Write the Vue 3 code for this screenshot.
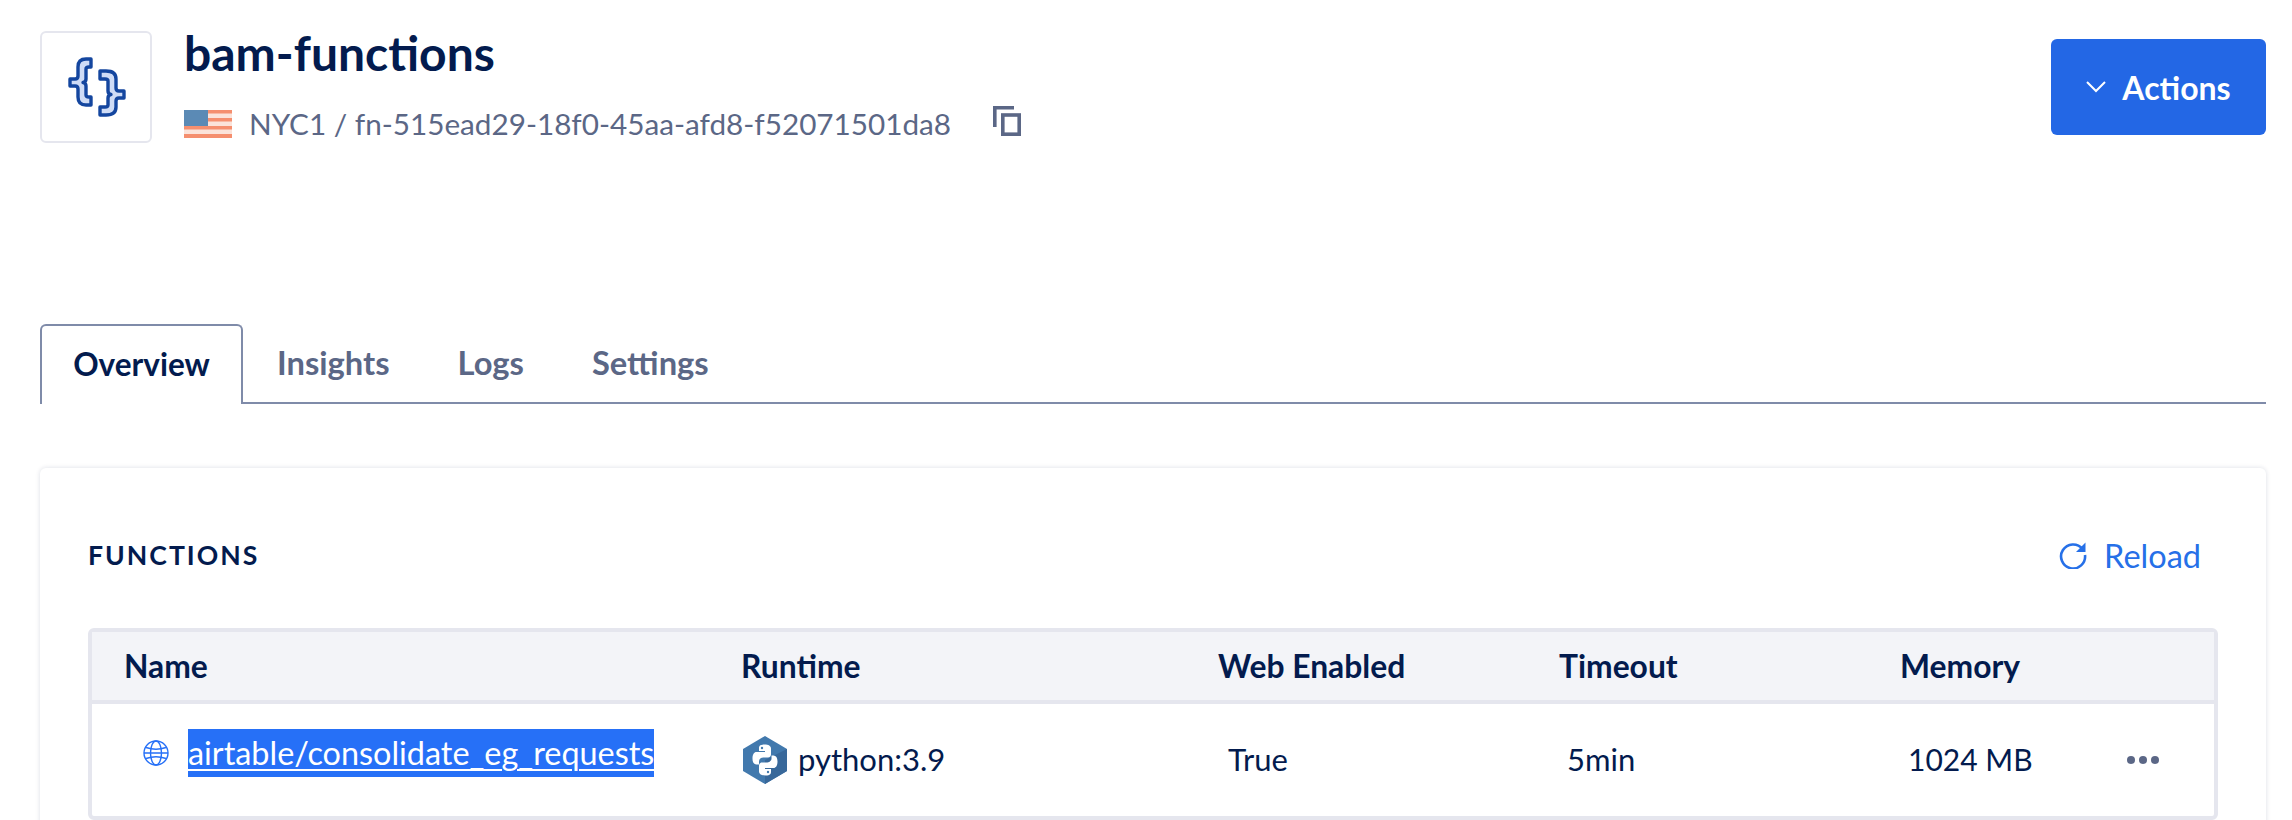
<script setup>
const cols = ['Name', 'Runtime', 'Web Enabled', 'Timeout', 'Memory']
const tabs = ['Insights', 'Logs', 'Settings']
</script>

<template>
  <div class="page">
    <header class="head">
      <div class="logo">
        <svg width="62" height="64" viewBox="0 0 62 64">
          <path class="brace" d="M26 4 H21 Q13 4 13 12 V21 Q13 24 10 24 H5 V31 H10 Q13 31 13 34 V42 Q13 50 21 50 H26 V42 H24 Q21 42 21 40 V31 Q21 28 18 27.5 Q21 27 21 24 V14 Q21 12 24 12 H26 Z" />
          <path class="brace" d="M35 16 H41 Q51 16 51 24 V33 Q51 36 54 36 H59 V43 H54 Q51 43 51 46 V52 Q51 60 41 60 H35 V52 H40 Q43 52 43 50 V43 Q43 40 46 39.5 Q43 39 43 36 V26 Q43 24 40 24 H35 Z" />
        </svg>
      </div>
      <div class="info">
        <h1 class="title">bam-functions</h1>
        <div class="sub">
          <svg class="flag" width="48" height="28" viewBox="0 0 48 28">
            <rect width="48" height="28" fill="#fbe3da" />
            <rect y="0" width="48" height="3.5" fill="#f58f6f" />
            <rect y="8" width="48" height="3.5" fill="#f58f6f" />
            <rect y="16" width="48" height="3.5" fill="#f58f6f" />
            <rect y="24" width="48" height="4" fill="#f58f6f" />
            <rect width="24" height="16" fill="#5b8ab5" />
          </svg>
          <span class="region">NYC1 / fn-515ead29-18f0-45aa-afd8-f52071501da8</span>
          <svg class="copy" width="28" height="30" viewBox="0 0 28 30" fill="none" stroke="#5b6786" stroke-width="3.6">
            <path d="M21 1.8 H1.8 V21" />
            <rect x="9.8" y="9" width="16.4" height="19.2" />
          </svg>
        </div>
      </div>
      <button class="actions">
        <svg width="20" height="12" viewBox="0 0 20 12" fill="none" stroke="#fff" stroke-width="2"><path d="M1 1 L10 10 L19 1" /></svg>
        <span>Actions</span>
      </button>
    </header>

    <nav class="tabs">
      <div class="tab active">Overview</div>
      <div v-for="t in tabs" :key="t" class="tab">{{ t }}</div>
      <div class="tab-rest"></div>
    </nav>

    <section class="card">
      <div class="card-head">
        <h2 class="fn">FUNCTIONS</h2>
        <div class="reload">
          <svg width="28" height="28" viewBox="0 0 28 28" fill="none">
            <path d="M23.5 8 A12 12 0 1 0 26 14" stroke="#2670e8" stroke-width="2.6" />
            <path d="M26.5 1.5 V11 H17 Z" fill="#2670e8" />
          </svg>
          <span>Reload</span>
        </div>
      </div>
      <div class="table">
        <div class="row th">
          <div v-for="c in cols" :key="c">{{ c }}</div>
        </div>
        <div class="row td">
          <div class="name">
            <svg width="26" height="26" viewBox="0 0 26 26" fill="none" stroke="#2670f7" stroke-width="1.4">
              <circle cx="13" cy="13" r="12" />
              <ellipse cx="13" cy="13" rx="5.5" ry="12" />
              <path d="M3 7.5 Q13 11 23 7.5 M1 13 H25 M3 18.5 Q13 15 23 18.5" />
            </svg>
            <a class="sel">airtable/consolidate_eg_requests</a>
          </div>
          <div class="runtime">
            <svg width="44" height="48" viewBox="0 0 44 48">
              <path d="M22 0 L44 13 V35 L22 48 L0 35 V13 Z" fill="#4279ad" />
              <path d="M22 24 L44 13 V35 L22 48 Z" fill="#38689a" />
              <path d="M21.5 8.5 C16.5 8.5 16 10.5 16 12.5 V15 H22 V16 H13.5 C11 16 9.5 18.5 9.5 22.5 C9.5 26.5 11 28.5 13.5 28.5 H16 V25.5 C16 23 18 21.5 20.5 21.5 H25 C27 21.5 28 20 28 18.5 V12.5 C28 10 25.5 8.5 21.5 8.5 Z" fill="#fff" />
              <path d="M22.5 39.5 C27.5 39.5 28 37.5 28 35.5 V33 H22 V32 H30.5 C33 32 34.5 29.5 34.5 25.5 C34.5 21.5 33 19.5 30.5 19.5 H28.5 V22.5 C28.5 25 26 26.5 23.5 26.5 H19 C17 26.5 16 28 16 29.5 V35.5 C16 38 18.5 39.5 22.5 39.5 Z" fill="#fff" />
              <circle cx="19" cy="12" r="1.2" fill="#4279ad" />
              <circle cx="25" cy="36" r="1.2" fill="#4279ad" />
            </svg>
            <span>python:3.9</span>
          </div>
          <div class="web">True</div>
          <div class="val">5min</div>
          <div class="val mem">
            <span>1024 MB</span>
            <span class="dots"><i></i><i></i><i></i></span>
          </div>
        </div>
      </div>
    </section>
  </div>
</template>

<style>
html, body { margin: 0; background: #fff; overflow: hidden; }
</style>

<style scoped>
.page {
  height: 820px;
  overflow: hidden;
  box-sizing: border-box;
  padding: 31px 26px 0 40px;
  font-family: Lato, "Liberation Sans", sans-serif;
  color: #031b4e;
}
.head { display: flex; align-items: flex-start; height: 293px; }
.logo {
  width: 112px; height: 112px; box-sizing: border-box;
  border: 2px solid #e5e6ee; border-radius: 6px;
  display: flex; align-items: center; justify-content: center;
}
.brace { fill: #cfdcf6; stroke: #14469f; stroke-width: 3.4; stroke-linejoin: round; }
.info { margin-left: 32px; flex: 1; }
.title { margin: -6px 0 0; font-size: 48px; line-height: 56px; font-weight: 700; color: #031b4e; }
.sub { display: flex; align-items: center; margin-top: 25px; color: #5b6786; font-size: 29.7px; line-height: 36px; }
.flag { flex: none; }
.region { margin-left: 17px; white-space: nowrap; }
.copy { margin-left: 42px; margin-top: -6px; }
.actions {
  width: 215px; height: 96px; margin-top: 8px; border: 0; border-radius: 6px;
  background: #2367e5; color: #fff; font: 700 32px Lato, sans-serif;
  display: flex; align-items: center; justify-content: center; gap: 16px;
}
.tabs { display: flex; height: 80px; }
.tab {
  box-sizing: border-box; padding: 0 34px; font-size: 32.7px; line-height: 78px;
  color: #5b6786; font-weight: 700; border-bottom: 2px solid #7f8ba9;
}
.tab.active {
  width: 203px; padding: 0; text-align: center; color: #031b4e; font-size: 31.5px; line-height: 76px;
  border: 2px solid #7f8ba9; border-bottom: 0; border-radius: 6px 6px 0 0;
}
.tab-rest { flex: 1; border-bottom: 2px solid #7f8ba9; }
.card {
  margin-top: 64px; height: 400px; box-sizing: border-box;
  padding: 0 48px; border-radius: 6px;
  box-shadow: 0 0 5px rgba(3, 27, 78, 0.14);
}
.card-head { display: flex; align-items: center; justify-content: space-between; height: 146px; padding-top: 14px; }
.fn { margin: 0; font-size: 26.6px; font-weight: 700; letter-spacing: 2px; color: #031b4e; }
.reload { display: flex; align-items: center; gap: 17px; color: #2670e8; font-size: 32.5px; margin-right: 17px; }
.table { border: 4px solid #e5e6ee; border-radius: 6px; }
.row { display: grid; grid-template-columns: 617px 477px 341px 341px 1fr; padding-left: 32px; }
.th { height: 68px; align-items: center; background: #f3f4f8; border-bottom: 4px solid #e5e6ee; font-size: 31.8px; font-weight: 700; }
.td { height: 112px; box-sizing: border-box; padding-bottom: 3px; align-items: center; font-size: 31px; }
.name { display: flex; align-items: center; margin-left: 19px; margin-bottom: 11px; gap: 19px; }
.name svg { flex: none; }
.sel {
  background: #2670f7; color: #fff; font-size: 32.4px; line-height: 48px; white-space: nowrap;
  text-decoration: underline; text-decoration-thickness: 2px; text-underline-offset: 4px;
}
.runtime { display: flex; align-items: center; gap: 11px; margin-left: 2px; }
.runtime svg { margin-top: 3px; }
.web { margin-left: 10px; }
.val { margin-left: 8px; }
.mem { display: flex; align-items: center; justify-content: space-between; padding-right: 55px; font-size: 30px; }
.dots { display: flex; gap: 4px; margin-top: 2px; }
.dots i { width: 8px; height: 8px; border-radius: 50%; background: #5b6786; }
</style>
